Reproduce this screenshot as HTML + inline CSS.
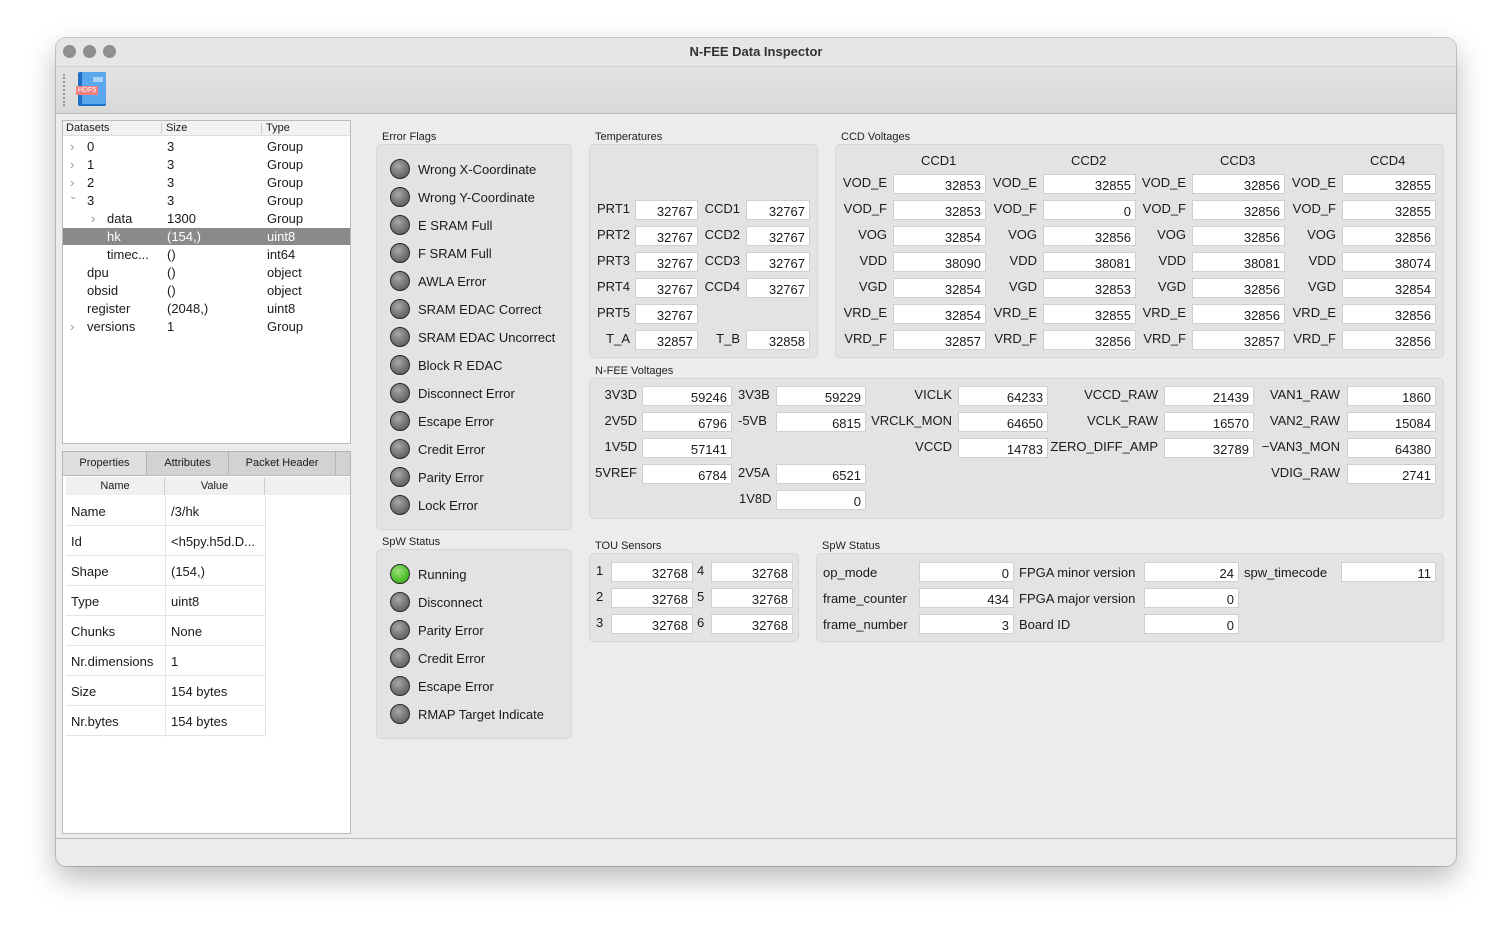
<!DOCTYPE html>
<html><head><meta charset="utf-8"><style>
*{box-sizing:border-box;margin:0;padding:0}
body{width:1512px;height:940px;background:#fff;font-family:"Liberation Sans",sans-serif;font-size:13px;color:#1a1a1a;position:relative;overflow:hidden}
.a{position:absolute}
#win{left:56px;top:38px;width:1400px;height:828px;border-radius:10px;background:#ececec;box-shadow:0 12px 30px rgba(0,0,0,.28),0 0 0 1px rgba(0,0,0,.18);overflow:hidden}
.dot{width:13px;height:13px;border-radius:50%;background:#8f8f8f;top:45px}
.box{background:#e3e3e3;border:1px solid #d6d6d6;border-radius:5px}
.gl{font-size:11px;color:#222}
.f{background:#fff;border:1px solid #cfcfcf;height:20px;text-align:right;padding-right:4px;line-height:22px;font-size:13px}
.l{height:20px;line-height:18px;white-space:nowrap}
.r{text-align:right}
.led{width:20px;height:20px;border-radius:50%;border:1.5px solid #2a2a2a;background:radial-gradient(circle at 40% 35%,#a8a8a8,#6e6e6e 60%,#555)}
.led.g{background:radial-gradient(circle at 40% 35%,#9be07a,#4fbf2c 60%,#3a9a20)}
.t{font-size:13px;white-space:nowrap}
</style></head><body>
<div id="win" class="a"></div>
<div class="a" style="left:56px;top:38px;width:1400px;height:28px;background:#e6e6e6;border-radius:10px 10px 0 0"></div>
<div class="a" style="left:56px;top:66px;width:1400px;height:48px;background:linear-gradient(#e4e4e4,#d8d8d8);border-top:1px solid #d0d0d0;border-bottom:1px solid #bdbdbd"></div>
<div class="a dot" style="left:63px"></div><div class="a dot" style="left:83px"></div><div class="a dot" style="left:103px"></div>
<div class="a" style="left:56px;width:1400px;top:44px;text-align:center;font-weight:bold;font-size:13px;color:#333">N-FEE Data Inspector</div>
<div class="a" style="left:63px;top:74px;width:2px;height:32px;border-left:2px dotted #999"></div>
<div class="a" style="left:78px;top:72px;width:28px;height:34px;background:#1c6fc4;border-radius:2px"></div>
<div class="a" style="left:82px;top:72px;width:24px;height:32px;background:#5aa7ee;border-radius:2px"></div>
<div class="a" style="left:93px;top:77px;width:10px;height:5px;background:#a9d2f7"></div>
<div class="a" style="left:76px;top:86px;width:22px;height:9px;background:#f07f7f;color:#fff;font-size:7px;line-height:9px;text-align:center">HDF5</div>
<div class="a" style="left:56px;top:838px;width:1400px;height:1px;background:#b8b8b8"></div>
<div class="a" style="left:56px;top:839px;width:1400px;height:27px;background:#ececec;border-radius:0 0 10px 10px"></div>

<!-- tree -->
<div class="a" style="left:62px;top:120px;width:289px;height:324px;background:#fff;border:1px solid #bbb"></div>
<div class="a" style="left:63px;top:121px;width:287px;height:15px;background:#f2f2f2;border-bottom:1px solid #ddd;font-size:11px;line-height:15px">
<span class="a" style="left:3px">Datasets</span><span class="a" style="left:98px;top:2px;height:11px;border-left:1px solid #ccc"></span><span class="a" style="left:103px">Size</span><span class="a" style="left:198px;top:2px;height:11px;border-left:1px solid #ccc"></span><span class="a" style="left:203px">Type</span></div>
<div class="a" style="left:63px;top:228px;width:287px;height:17px;background:#8a8a8a"></div>
<div class="a t" style="left:70px;top:139px;color:#999">›</div><div class="a t" style="left:87px;top:139px">0</div><div class="a t" style="left:167px;top:139px">3</div><div class="a t" style="left:267px;top:139px">Group</div>
<div class="a t" style="left:70px;top:157px;color:#999">›</div><div class="a t" style="left:87px;top:157px">1</div><div class="a t" style="left:167px;top:157px">3</div><div class="a t" style="left:267px;top:157px">Group</div>
<div class="a t" style="left:70px;top:175px;color:#999">›</div><div class="a t" style="left:87px;top:175px">2</div><div class="a t" style="left:167px;top:175px">3</div><div class="a t" style="left:267px;top:175px">Group</div>
<div class="a t" style="left:69px;top:191px;color:#999;font-size:10px">⌄</div><div class="a t" style="left:87px;top:193px">3</div><div class="a t" style="left:167px;top:193px">3</div><div class="a t" style="left:267px;top:193px">Group</div>
<div class="a t" style="left:91px;top:211px;color:#999">›</div><div class="a t" style="left:107px;top:211px">data</div><div class="a t" style="left:167px;top:211px">1300</div><div class="a t" style="left:267px;top:211px">Group</div>
<div class="a t" style="left:107px;top:229px;color:#fff">hk</div><div class="a t" style="left:167px;top:229px;color:#fff">(154,)</div><div class="a t" style="left:267px;top:229px;color:#fff">uint8</div>
<div class="a t" style="left:107px;top:247px">timec...</div><div class="a t" style="left:167px;top:247px">()</div><div class="a t" style="left:267px;top:247px">int64</div>
<div class="a t" style="left:87px;top:265px">dpu</div><div class="a t" style="left:167px;top:265px">()</div><div class="a t" style="left:267px;top:265px">object</div>
<div class="a t" style="left:87px;top:283px">obsid</div><div class="a t" style="left:167px;top:283px">()</div><div class="a t" style="left:267px;top:283px">object</div>
<div class="a t" style="left:87px;top:301px">register</div><div class="a t" style="left:167px;top:301px">(2048,)</div><div class="a t" style="left:267px;top:301px">uint8</div>
<div class="a t" style="left:70px;top:319px;color:#999">›</div><div class="a t" style="left:87px;top:319px">versions</div><div class="a t" style="left:167px;top:319px">1</div><div class="a t" style="left:267px;top:319px">Group</div>

<!-- tabs -->
<div class="a" style="left:62px;top:451px;width:289px;height:25px;background:#d2d2d2;border:1px solid #b5b5b5"></div>
<div class="a" style="left:62px;top:451px;width:85px;height:25px;background:#dedede;border:1px solid #b5b5b5;text-align:center;line-height:23px;font-size:11px">Properties</div>
<div class="a" style="left:146px;top:451px;width:83px;height:25px;border:1px solid #b5b5b5;text-align:center;line-height:23px;font-size:11px">Attributes</div>
<div class="a" style="left:228px;top:451px;width:108px;height:25px;border:1px solid #b5b5b5;text-align:center;line-height:23px;font-size:11px">Packet Header</div>
<div class="a" style="left:62px;top:475px;width:289px;height:359px;background:#fff;border:1px solid #bbb"></div>
<div class="a" style="left:66px;top:477px;width:284px;height:18px;background:#f0f0f0;font-size:11px;line-height:18px">
<span class="a" style="left:0;width:99px;text-align:center;border-right:1px solid #ccc">Name</span><span class="a" style="left:99px;width:100px;text-align:center;border-right:1px solid #ccc">Value</span></div>
<div class="a" style="left:66px;top:496px;width:200px;height:241px;background:repeating-linear-gradient(#fff 0,#fff 29px,#e4e4e4 29px,#e4e4e4 30px)"></div>
<div class="a" style="left:165px;top:496px;width:1px;height:241px;background:#e4e4e4"></div>
<div class="a" style="left:265px;top:496px;width:1px;height:241px;background:#e4e4e4"></div>
<div class="a t" style="left:71px;top:504px">Name</div><div class="a t" style="left:171px;top:504px">/3/hk</div>
<div class="a t" style="left:71px;top:534px">Id</div><div class="a t" style="left:171px;top:534px">&lt;h5py.h5d.D...</div>
<div class="a t" style="left:71px;top:564px">Shape</div><div class="a t" style="left:171px;top:564px">(154,)</div>
<div class="a t" style="left:71px;top:594px">Type</div><div class="a t" style="left:171px;top:594px">uint8</div>
<div class="a t" style="left:71px;top:624px">Chunks</div><div class="a t" style="left:171px;top:624px">None</div>
<div class="a t" style="left:71px;top:654px">Nr.dimensions</div><div class="a t" style="left:171px;top:654px">1</div>
<div class="a t" style="left:71px;top:684px">Size</div><div class="a t" style="left:171px;top:684px">154 bytes</div>
<div class="a t" style="left:71px;top:714px">Nr.bytes</div><div class="a t" style="left:171px;top:714px">154 bytes</div>

<!-- Error flags -->
<div class="a gl" style="left:382px;top:131px">Error Flags</div>
<div class="a box" style="left:376px;top:144px;width:196px;height:386px"></div>
<div class="a led" style="left:390px;top:159px"></div><div class="a t" style="left:418px;top:162px">Wrong X-Coordinate</div>
<div class="a led" style="left:390px;top:187px"></div><div class="a t" style="left:418px;top:190px">Wrong Y-Coordinate</div>
<div class="a led" style="left:390px;top:215px"></div><div class="a t" style="left:418px;top:218px">E SRAM Full</div>
<div class="a led" style="left:390px;top:243px"></div><div class="a t" style="left:418px;top:246px">F SRAM Full</div>
<div class="a led" style="left:390px;top:271px"></div><div class="a t" style="left:418px;top:274px">AWLA Error</div>
<div class="a led" style="left:390px;top:299px"></div><div class="a t" style="left:418px;top:302px">SRAM EDAC Correct</div>
<div class="a led" style="left:390px;top:327px"></div><div class="a t" style="left:418px;top:330px">SRAM EDAC Uncorrect</div>
<div class="a led" style="left:390px;top:355px"></div><div class="a t" style="left:418px;top:358px">Block R EDAC</div>
<div class="a led" style="left:390px;top:383px"></div><div class="a t" style="left:418px;top:386px">Disconnect Error</div>
<div class="a led" style="left:390px;top:411px"></div><div class="a t" style="left:418px;top:414px">Escape Error</div>
<div class="a led" style="left:390px;top:439px"></div><div class="a t" style="left:418px;top:442px">Credit Error</div>
<div class="a led" style="left:390px;top:467px"></div><div class="a t" style="left:418px;top:470px">Parity Error</div>
<div class="a led" style="left:390px;top:495px"></div><div class="a t" style="left:418px;top:498px">Lock Error</div>

<div class="a gl" style="left:382px;top:536px">SpW Status</div>
<div class="a box" style="left:376px;top:549px;width:196px;height:190px"></div>
<div class="a led g" style="left:390px;top:564px"></div><div class="a t" style="left:418px;top:567px">Running</div>
<div class="a led" style="left:390px;top:592px"></div><div class="a t" style="left:418px;top:595px">Disconnect</div>
<div class="a led" style="left:390px;top:620px"></div><div class="a t" style="left:418px;top:623px">Parity Error</div>
<div class="a led" style="left:390px;top:648px"></div><div class="a t" style="left:418px;top:651px">Credit Error</div>
<div class="a led" style="left:390px;top:676px"></div><div class="a t" style="left:418px;top:679px">Escape Error</div>
<div class="a led" style="left:390px;top:704px"></div><div class="a t" style="left:418px;top:707px">RMAP Target Indicate</div>

<!-- Temperatures -->
<div class="a gl" style="left:595px;top:131px">Temperatures</div>
<div class="a box" style="left:589px;top:144px;width:229px;height:214px"></div>
<div class="a l r" style="left:590px;top:200px;width:40px">PRT1</div><div class="a f" style="left:635px;top:200px;width:63px">32767</div><div class="a l r" style="left:700px;top:200px;width:40px">CCD1</div><div class="a f" style="left:746px;top:200px;width:64px">32767</div>
<div class="a l r" style="left:590px;top:226px;width:40px">PRT2</div><div class="a f" style="left:635px;top:226px;width:63px">32767</div><div class="a l r" style="left:700px;top:226px;width:40px">CCD2</div><div class="a f" style="left:746px;top:226px;width:64px">32767</div>
<div class="a l r" style="left:590px;top:252px;width:40px">PRT3</div><div class="a f" style="left:635px;top:252px;width:63px">32767</div><div class="a l r" style="left:700px;top:252px;width:40px">CCD3</div><div class="a f" style="left:746px;top:252px;width:64px">32767</div>
<div class="a l r" style="left:590px;top:278px;width:40px">PRT4</div><div class="a f" style="left:635px;top:278px;width:63px">32767</div><div class="a l r" style="left:700px;top:278px;width:40px">CCD4</div><div class="a f" style="left:746px;top:278px;width:64px">32767</div>
<div class="a l r" style="left:590px;top:304px;width:40px">PRT5</div><div class="a f" style="left:635px;top:304px;width:63px">32767</div>
<div class="a l r" style="left:590px;top:330px;width:40px">T_A</div><div class="a f" style="left:635px;top:330px;width:63px">32857</div><div class="a l r" style="left:700px;top:330px;width:40px">T_B</div><div class="a f" style="left:746px;top:330px;width:64px">32858</div>

<!-- CCD Voltages -->
<div class="a gl" style="left:841px;top:131px">CCD Voltages</div>
<div class="a box" style="left:835px;top:144px;width:609px;height:214px"></div>
<div class="a t" style="left:921px;top:153px">CCD1</div><div class="a t" style="left:1071px;top:153px">CCD2</div><div class="a t" style="left:1220px;top:153px">CCD3</div><div class="a t" style="left:1370px;top:153px">CCD4</div>
<!-- rows -->
<div class="a l r" style="left:837px;top:174px;width:50px">VOD_E</div><div class="a f" style="left:893px;top:174px;width:93px">32853</div><div class="a l r" style="left:987px;top:174px;width:50px">VOD_E</div><div class="a f" style="left:1043px;top:174px;width:93px">32855</div><div class="a l r" style="left:1136px;top:174px;width:50px">VOD_E</div><div class="a f" style="left:1192px;top:174px;width:93px">32856</div><div class="a l r" style="left:1286px;top:174px;width:50px">VOD_E</div><div class="a f" style="left:1342px;top:174px;width:94px">32855</div>
<div class="a l r" style="left:837px;top:200px;width:50px">VOD_F</div><div class="a f" style="left:893px;top:200px;width:93px">32853</div><div class="a l r" style="left:987px;top:200px;width:50px">VOD_F</div><div class="a f" style="left:1043px;top:200px;width:93px">0</div><div class="a l r" style="left:1136px;top:200px;width:50px">VOD_F</div><div class="a f" style="left:1192px;top:200px;width:93px">32856</div><div class="a l r" style="left:1286px;top:200px;width:50px">VOD_F</div><div class="a f" style="left:1342px;top:200px;width:94px">32855</div>
<div class="a l r" style="left:837px;top:226px;width:50px">VOG</div><div class="a f" style="left:893px;top:226px;width:93px">32854</div><div class="a l r" style="left:987px;top:226px;width:50px">VOG</div><div class="a f" style="left:1043px;top:226px;width:93px">32856</div><div class="a l r" style="left:1136px;top:226px;width:50px">VOG</div><div class="a f" style="left:1192px;top:226px;width:93px">32856</div><div class="a l r" style="left:1286px;top:226px;width:50px">VOG</div><div class="a f" style="left:1342px;top:226px;width:94px">32856</div>
<div class="a l r" style="left:837px;top:252px;width:50px">VDD</div><div class="a f" style="left:893px;top:252px;width:93px">38090</div><div class="a l r" style="left:987px;top:252px;width:50px">VDD</div><div class="a f" style="left:1043px;top:252px;width:93px">38081</div><div class="a l r" style="left:1136px;top:252px;width:50px">VDD</div><div class="a f" style="left:1192px;top:252px;width:93px">38081</div><div class="a l r" style="left:1286px;top:252px;width:50px">VDD</div><div class="a f" style="left:1342px;top:252px;width:94px">38074</div>
<div class="a l r" style="left:837px;top:278px;width:50px">VGD</div><div class="a f" style="left:893px;top:278px;width:93px">32854</div><div class="a l r" style="left:987px;top:278px;width:50px">VGD</div><div class="a f" style="left:1043px;top:278px;width:93px">32853</div><div class="a l r" style="left:1136px;top:278px;width:50px">VGD</div><div class="a f" style="left:1192px;top:278px;width:93px">32856</div><div class="a l r" style="left:1286px;top:278px;width:50px">VGD</div><div class="a f" style="left:1342px;top:278px;width:94px">32854</div>
<div class="a l r" style="left:837px;top:304px;width:50px">VRD_E</div><div class="a f" style="left:893px;top:304px;width:93px">32854</div><div class="a l r" style="left:987px;top:304px;width:50px">VRD_E</div><div class="a f" style="left:1043px;top:304px;width:93px">32855</div><div class="a l r" style="left:1136px;top:304px;width:50px">VRD_E</div><div class="a f" style="left:1192px;top:304px;width:93px">32856</div><div class="a l r" style="left:1286px;top:304px;width:50px">VRD_E</div><div class="a f" style="left:1342px;top:304px;width:94px">32856</div>
<div class="a l r" style="left:837px;top:330px;width:50px">VRD_F</div><div class="a f" style="left:893px;top:330px;width:93px">32857</div><div class="a l r" style="left:987px;top:330px;width:50px">VRD_F</div><div class="a f" style="left:1043px;top:330px;width:93px">32856</div><div class="a l r" style="left:1136px;top:330px;width:50px">VRD_F</div><div class="a f" style="left:1192px;top:330px;width:93px">32857</div><div class="a l r" style="left:1286px;top:330px;width:50px">VRD_F</div><div class="a f" style="left:1342px;top:330px;width:94px">32856</div>

<!-- N-FEE Voltages -->
<div class="a gl" style="left:595px;top:365px">N-FEE Voltages</div>
<div class="a box" style="left:589px;top:378px;width:855px;height:141px"></div>
<div class="a l r" style="left:590px;top:386px;width:47px">3V3D</div><div class="a f" style="left:642px;top:386px;width:90px">59246</div><div class="a l" style="left:738px;top:386px">3V3B</div><div class="a f" style="left:776px;top:386px;width:90px">59229</div><div class="a l r" style="left:860px;top:386px;width:92px">VICLK</div><div class="a f" style="left:958px;top:386px;width:90px">64233</div><div class="a l r" style="left:1050px;top:386px;width:108px">VCCD_RAW</div><div class="a f" style="left:1164px;top:386px;width:90px">21439</div><div class="a l r" style="left:1256px;top:386px;width:84px">VAN1_RAW</div><div class="a f" style="left:1347px;top:386px;width:89px">1860</div>
<div class="a l r" style="left:590px;top:412px;width:47px">2V5D</div><div class="a f" style="left:642px;top:412px;width:90px">6796</div><div class="a l" style="left:738px;top:412px">-5VB</div><div class="a f" style="left:776px;top:412px;width:90px">6815</div><div class="a l r" style="left:860px;top:412px;width:92px">VRCLK_MON</div><div class="a f" style="left:958px;top:412px;width:90px">64650</div><div class="a l r" style="left:1050px;top:412px;width:108px">VCLK_RAW</div><div class="a f" style="left:1164px;top:412px;width:90px">16570</div><div class="a l r" style="left:1256px;top:412px;width:84px">VAN2_RAW</div><div class="a f" style="left:1347px;top:412px;width:89px">15084</div>
<div class="a l r" style="left:590px;top:438px;width:47px">1V5D</div><div class="a f" style="left:642px;top:438px;width:90px">57141</div><div class="a l r" style="left:860px;top:438px;width:92px">VCCD</div><div class="a f" style="left:958px;top:438px;width:90px">14783</div><div class="a l r" style="left:1040px;top:438px;width:118px">ZERO_DIFF_AMP</div><div class="a f" style="left:1164px;top:438px;width:90px">32789</div><div class="a l r" style="left:1250px;top:438px;width:90px">−VAN3_MON</div><div class="a f" style="left:1347px;top:438px;width:89px">64380</div>
<div class="a l r" style="left:590px;top:464px;width:47px">5VREF</div><div class="a f" style="left:642px;top:464px;width:90px">6784</div><div class="a l" style="left:738px;top:464px">2V5A</div><div class="a f" style="left:776px;top:464px;width:90px">6521</div><div class="a l r" style="left:1256px;top:464px;width:84px">VDIG_RAW</div><div class="a f" style="left:1347px;top:464px;width:89px">2741</div>
<div class="a l" style="left:739px;top:490px">1V8D</div><div class="a f" style="left:776px;top:490px;width:90px">0</div>

<!-- TOU -->
<div class="a gl" style="left:595px;top:540px">TOU Sensors</div>
<div class="a box" style="left:589px;top:553px;width:210px;height:89px"></div>
<div class="a l" style="left:596px;top:562px">1</div><div class="a f" style="left:611px;top:562px;width:82px">32768</div><div class="a l" style="left:697px;top:562px">4</div><div class="a f" style="left:711px;top:562px;width:82px">32768</div>
<div class="a l" style="left:596px;top:588px">2</div><div class="a f" style="left:611px;top:588px;width:82px">32768</div><div class="a l" style="left:697px;top:588px">5</div><div class="a f" style="left:711px;top:588px;width:82px">32768</div>
<div class="a l" style="left:596px;top:614px">3</div><div class="a f" style="left:611px;top:614px;width:82px">32768</div><div class="a l" style="left:697px;top:614px">6</div><div class="a f" style="left:711px;top:614px;width:82px">32768</div>

<!-- SpW status right -->
<div class="a gl" style="left:822px;top:540px">SpW Status</div>
<div class="a box" style="left:816px;top:553px;width:628px;height:89px"></div>
<div class="a l" style="left:823px;top:564px">op_mode</div><div class="a f" style="left:919px;top:562px;width:95px">0</div><div class="a l" style="left:1019px;top:564px">FPGA minor version</div><div class="a f" style="left:1144px;top:562px;width:95px">24</div><div class="a l" style="left:1244px;top:564px">spw_timecode</div><div class="a f" style="left:1341px;top:562px;width:95px">11</div>
<div class="a l" style="left:823px;top:590px">frame_counter</div><div class="a f" style="left:919px;top:588px;width:95px">434</div><div class="a l" style="left:1019px;top:590px">FPGA major version</div><div class="a f" style="left:1144px;top:588px;width:95px">0</div>
<div class="a l" style="left:823px;top:616px">frame_number</div><div class="a f" style="left:919px;top:614px;width:95px">3</div><div class="a l" style="left:1019px;top:616px">Board ID</div><div class="a f" style="left:1144px;top:614px;width:95px">0</div>
</body></html>
